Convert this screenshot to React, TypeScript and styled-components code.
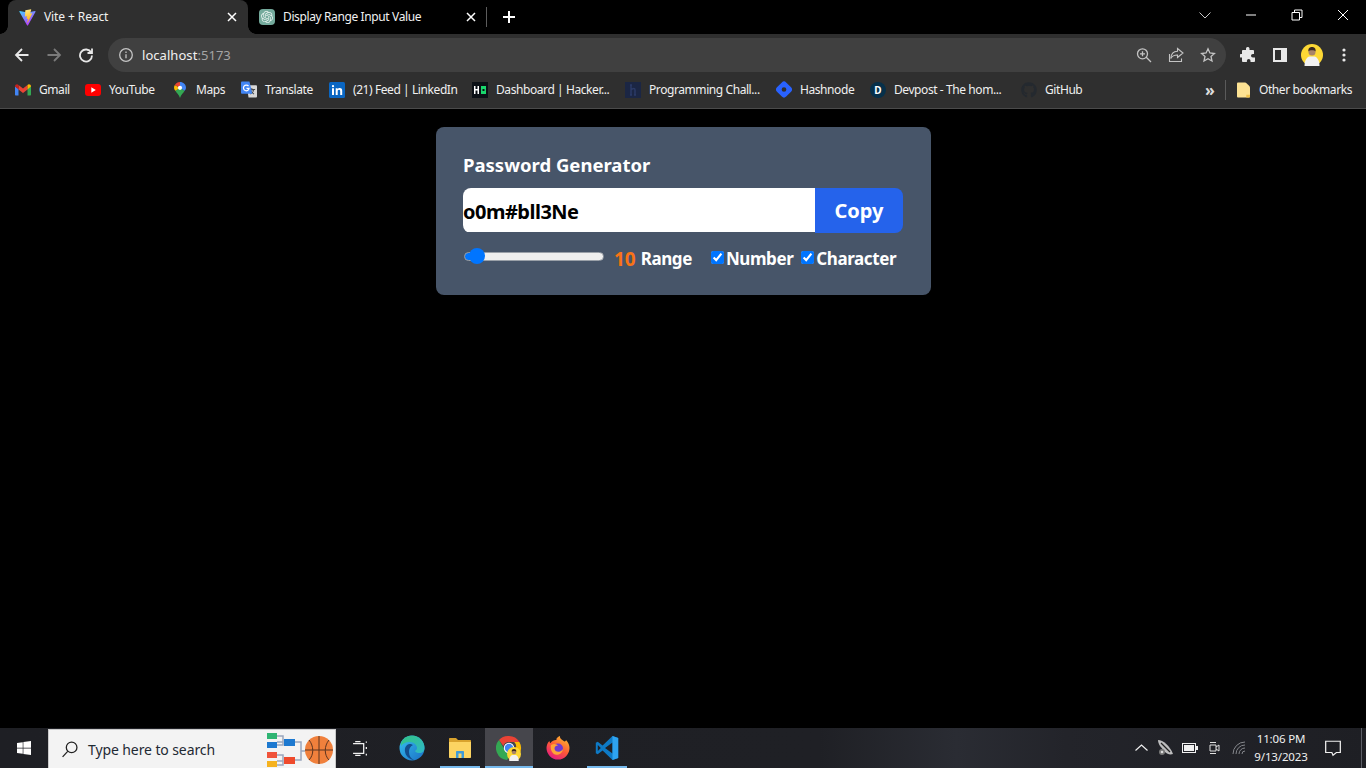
import React from "react";
import styled, { createGlobalStyle } from "styled-components";
import { FaGithub, FaWindows } from "react-icons/fa";
import { SiOpenai } from "react-icons/si";

const UI = '"Noto Sans", "Open Sans", "Liberation Sans", sans-serif';

const Global = createGlobalStyle`
  html, body { margin: 0; padding: 0; height: 100%; background: #000; overflow: hidden; }
  #root { height: 100%; }
  * { box-sizing: border-box; }
`;

const Screen = styled.div`
  width: 1366px; height: 768px; display: flex; flex-direction: column;
  background: #000; font-family: ${UI}; color: #fff; overflow: hidden;
`;

/* ---- tab strip ---- */
const TabStrip = styled.div`
  height: 34px; flex: none; display: flex; align-items: stretch; padding-left: 8px; background: #000;
`;
const Tab = styled.div<{ $active?: boolean }>`
  position: relative; width: ${p => (p.$active ? 240 : 239)}px; display: flex; align-items: center;
  padding: 0 8px 0 ${p => (p.$active ? 11 : 10)}px;
  background: ${p => (p.$active ? "#2f2f2f" : "transparent")};
  border-radius: 8px 8px 0 0;
  ${p => p.$active && `
    &::before, &::after { content: ""; position: absolute; bottom: 0; width: 8px; height: 8px;
      background: radial-gradient(circle at var(--c) 0, #000 7.5px, #2f2f2f 8px); }
    &::before { left: -8px; --c: 0; }
    &::after { right: -8px; --c: 8px; }
  `}
`;
const TabIcon = styled.span`
  width: 17px; height: 17px; flex: none; display: flex; align-items: center; justify-content: flex-end; margin-right: 8px;
`;
const ChatBadge = styled.span`
  width: 16px; height: 16px; border-radius: 4px; background: #74aa9c; color: #e8f3f0;
  display: flex; align-items: center; justify-content: center;
`;
const TabTitle = styled.span<{ $spacing: number }>`
  flex: 1; font-size: 12px; letter-spacing: ${p => p.$spacing}px; white-space: nowrap; color: #f1f1f1; line-height: 16px;
`;
const TabDivider = styled.div`
  width: 1px; height: 20px; background: #5c5c5c; align-self: center; margin-left: -1px;
`;
const NewTab = styled.div`
  width: 44px; display: flex; align-items: center; justify-content: center;
`;
const WindowControls = styled.div`
  margin-left: auto; display: flex; align-items: stretch; height: 30px;
`;
const WinBtn = styled.div`
  width: 46px; display: flex; align-items: center; justify-content: center;
`;

/* ---- toolbar ---- */
const Toolbar = styled.div`
  height: 42px; flex: none; background: #2f2f2f; display: flex; align-items: flex-start; padding: 4px 6px 0 6px;
`;
const ToolBtn = styled.div`
  width: 32px; height: 34px; flex: none; display: flex; align-items: center; justify-content: center;
`;
const Omnibox = styled.div`
  flex: 1; height: 34px; margin: 0 6px; background: #404040; border-radius: 17px;
  display: flex; align-items: center; padding: 0 2px 0 10px;
`;
const Url = styled.div`
  flex: 1; margin-left: 8px; font-size: 13px; letter-spacing: 0.05px; color: #f0f0f0; white-space: nowrap;
  span { color: #a4a4a4; }
`;

/* ---- bookmarks ---- */
const Bookmarks = styled.div`
  height: 33px; flex: none; background: #2f2f2f; border-bottom: 1px solid #4b4b4b;
  display: flex; align-items: center; padding: 0 14px 5px 15px;
`;
const Bookmark = styled.div`
  display: flex; align-items: center; margin-right: 16px;
`;
const BmIcon = styled.span`
  width: 16px; height: 16px; flex: none; margin-right: 8px; display: flex; align-items: center; justify-content: center;
`;
const BmLabel = styled.span<{ $w: number }>`
  width: ${p => p.$w}px; font-size: 12px; letter-spacing: -0.42px; white-space: nowrap; color: #f0f0f0; line-height: 16px;
`;
const BmRight = styled.div`
  margin-left: auto; display: flex; align-items: center;
`;
const Chevrons = styled.span`
  font-size: 16px; font-weight: 700; color: #dcdcdc; line-height: 16px; width: 14px; margin-right: 8px; text-align: center;
`;
const BmDivider = styled.span`
  width: 1px; height: 20px; background: #5a5a5a; margin-right: 9px;
`;

/* ---- page ---- */
const Page = styled.main`
  flex: 1; background: #000; display: flex; justify-content: center; align-items: flex-start; padding: 18px 0 0 1px;
`;
const Card = styled.section`
  width: 495px; height: 168px; background: #475569; border-radius: 8px; padding: 23px 28px 0 27px;
`;
const Title = styled.h1`
  margin: 0 0 9px; font-size: 18.5px; line-height: 29px; font-weight: 700; color: #fff;
`;
const InputRow = styled.div`
  display: flex; align-items: flex-start; height: 45px; border-radius: 8px; overflow: hidden;
`;
const PasswordField = styled.input`
  flex: 1; min-width: 0; height: 44px; border: 0; outline: 0; padding: 2px 0 0; background: #fff; color: #000;
  font: 700 20px/42px ${UI}; letter-spacing: -0.5px;
`;
const CopyBtn = styled.button`
  width: 88px; height: 45px; border: 0; padding: 0; background: #2563eb; color: #fff;
  font: 700 20px/45px ${UI};
`;
const Controls = styled.div`
  display: flex; align-items: center; height: 30px; margin-top: 11px;
`;
const RangeInput = styled.input`
  -webkit-appearance: none; appearance: none; width: 140px; height: 16px; margin: 0 0 5px 1px; background: transparent; flex: none;
  &::-webkit-slider-runnable-track {
    height: 9px; border-radius: 4.5px; border: 1px solid #9aa0a8;
    background: linear-gradient(90deg, #0075ff 0 8px, #efefef 8px);
  }
  &::-webkit-slider-thumb {
    -webkit-appearance: none; width: 16px; height: 16px; border-radius: 50%; background: #0075ff; margin-top: -5px; border: 0;
  }
`;
const RangeValue = styled.span`
  margin-left: 10px; font-size: 19px; font-weight: 700; color: #f97316; line-height: 28px;
`;
const ControlLabel = styled.label<{ $gap: number }>`
  margin-left: ${p => p.$gap}px; font-size: 17px; font-weight: 700; color: #fff; line-height: 28px;
  letter-spacing: -0.42px; white-space: nowrap; display: flex; align-items: center;
`;
const Check = styled.input`
  width: 13px; height: 13px; margin: 0 2px 3px 0; accent-color: #0075ff; flex: none;
`;

/* ---- taskbar ---- */
const Taskbar = styled.footer`
  height: 40px; flex: none; display: flex; align-items: stretch;
  background: linear-gradient(90deg, #1e1f24 0, #1f2025 60%, #2a2c33 70%, #23242a 78%, #1e1f24 100%);
`;
const TaskCell = styled.div<{ $active?: boolean; $open?: boolean; $w?: number }>`
  position: relative; width: ${p => p.$w ?? 48}px; flex: none; display: flex; align-items: center; justify-content: center;
  background: ${p => (p.$active ? "#46464c" : "transparent")};
  ${p => p.$open && `
    &::after { content: ""; position: absolute; bottom: 0; height: 2px; background: #76b9ed;
      left: ${p.$active ? 0 : 4}px; right: ${p.$active ? 0 : 4}px; }
  `}
`;
const BadgedIcon = styled.span`
  position: relative; display: block; width: 26px; height: 26px;
`;
const OverlayBadge = styled.span`
  position: absolute; right: 1px; bottom: 0; width: 14px; height: 14px; display: block; line-height: 0;
`;
const Search = styled.div`
  width: 288px; flex: none; margin-top: 1px; background: #f3f3f3; border: 1px solid #c9c9c9; border-bottom: 0;
  display: flex; align-items: center; padding-left: 12px; color: #1f2a33;
`;
const SearchText = styled.span`
  margin-left: 10px; font-size: 14px; letter-spacing: -0.1px; flex: 1; white-space: nowrap;
`;
const Tray = styled.div`
  margin-left: auto; display: flex; align-items: stretch;
`;
const Clock = styled.div`
  width: 60px; margin-right: -2px; display: flex; flex-direction: column; align-items: center; justify-content: center;
  font-size: 11.5px; line-height: 18px; letter-spacing: -0.15px; color: #f0f0f0; white-space: nowrap;
`;
const ShowDesktop = styled.div`
  width: 9px; flex: none; display: flex; justify-content: center;
  &::before { content: ""; width: 1px; background: #5c5e66; }
`;
const Bracket = styled.svg`
  margin-right: 2px;
`;

/* ---- drawings ---- */
const ViteLogo = () => (
  <svg width="17" height="17" viewBox="0 0 410 404">
    <defs>
      <linearGradient id="va" x1="0" y1="0" x2="0.6" y2="1"><stop offset="0" stopColor="#41d1ff" /><stop offset="1" stopColor="#bd34fe" /></linearGradient>
      <linearGradient id="vb" x1="0.4" y1="0" x2="0.6" y2="1"><stop offset="0" stopColor="#ffea83" /><stop offset="1" stopColor="#ffa800" /></linearGradient>
    </defs>
    <path fill="url(#va)" d="M399 63 215 392c-4 7-14 7-18 0L9 63c-4-7 2-16 10-15l184 33a10 10 0 0 0 4 0l180-33c8-1 14 8 12 15Z" />
    <path fill="url(#vb)" d="M292 1 156 28c-2 0-4 2-4 5l-8 142c0 3 3 6 6 5l38-9c4-1 7 2 6 6l-11 55c-1 4 3 7 6 6l23-7c4-1 7 2 6 6l-18 86c-1 5 6 8 9 3l2-3 108-216c2-4-1-8-5-7l-38 7c-4 1-7-3-6-6l25-86c1-4-3-8-7-7Z" />
  </svg>
);
const Line = ({ d, w = 1.2, c = "#fff", s = 16 }: { d: string; w?: number; c?: string; s?: number }) => (
  <svg width={s} height={s} viewBox="0 0 16 16" fill="none" stroke={c} strokeWidth={w}><path d={d} /></svg>
);
const Gmail = () => (
  <svg width="16" height="13" viewBox="0 0 16 12">
    <path fill="#4285f4" d="M0 3v8c0 .6.4 1 1 1h2.500V5z" /><path fill="#34a853" d="M16 3v8c0 .6-.4 1-1 1h-2.500V5z" />
    <path fill="#ea4335" d="M3.500 6V1.500L8 5l4.500-3.500V6L8 9.400z" /><path fill="#c5221f" d="M0 3c0-2.200 2.300-3 3.500-1.600V6z" /><path fill="#fbbc04" d="M16 3c0-2.200-2.300-3-3.500-1.600V6z" />
  </svg>
);
const YouTube = () => (
  <svg width="16" height="12" viewBox="0 0 16 12"><rect width="16" height="12" rx="3" fill="#f00" /><path fill="#fff" d="M6.300 3.300 10.800 6l-4.500 2.700z" /></svg>
);
const MapsPin = () => (
  <svg width="12" height="16" viewBox="0 0 12 16">
    <path fill="#34a853" d="M6 16C5 13 2.800 11 1.300 8.800L6 6l4.700 2.800C9.200 11 7 13 6 16Z" />
    <path fill="#fbbc04" d="M1.300 8.800C.4 7.700 0 6.800 0 5.800c0-1 .3-2 .9-2.800L6 6z" />
    <path fill="#ea4335" d="M.9 3C2 1.200 3.800 0 6 0l2 2.500L6 6z" />
    <path fill="#4285f4" d="M6 0c3.300 0 6 2.600 6 5.800 0 1-.4 2-1.300 3L6 6z" />
    <circle cx="6" cy="5.800" r="2.100" fill="#fff" />
  </svg>
);
const Translate = () => (
  <svg width="17" height="17" viewBox="0 0 17 17">
    <path fill="#d8d8d8" d="M6 4h10c.6 0 1 .4 1 1v11c0 .6-.4 1-1 1H8z" />
    <path fill="#4a4a4a" d="M11 7h1v1h3v1h-1c-.3 1.200-.8 2-1.400 2.700l1.500 1.300-.6.700-1.600-1.300-1.700 1.300-.6-.7 1.700-1.400c-.4-.5-.7-1-.9-1.500h1c.2.300.4.700.6 1 .5-.5.800-1.100 1-1.600H9.500V8H11z" />
    <path fill="#4285f4" d="M1 0h8l3 13H1c-.6 0-1-.4-1-1V1c0-.6.400-1 1-1Z" />
    <path fill="none" stroke="#fff" strokeWidth="1.300" d="M8 5a3 3 0 1 0 .6 2.200H5.800" />
  </svg>
);
const LinkedIn = () => (
  <svg width="16" height="16" viewBox="0 0 16 16">
    <rect width="16" height="16" rx="1.500" fill="#0a66c2" />
    <path fill="#fff" d="M3 6.200h2V13H3zM4 3a1.100 1.100 0 1 1 0 2.300A1.100 1.100 0 0 1 4 3Zm2.700 3.200h1.900v.9c.4-.6 1.100-1.100 2.100-1.100 2 0 2.500 1.300 2.500 3.100V13h-2V9.500c0-.9-.1-1.800-1.200-1.800S8.700 8.500 8.700 9.500V13h-2z" />
  </svg>
);
const HackerRank = () => (
  <svg width="16" height="16" viewBox="0 0 16 16">
    <rect width="16" height="16" fill="#0b1016" />
    <path fill="#fff" d="M2 4h1.500v3h2V4H7v8H5.500V8.500h-2V12H2z" /><rect x="9" y="4" width="5" height="8" fill="#19d76c" /><rect x="10.500" y="7" width="2" height="2" fill="#0b1016" />
  </svg>
);
const HashBook = () => (
  <svg width="16" height="16" viewBox="0 0 16 16">
    <rect width="16" height="16" fill="#1b2644" />
    <path fill="none" stroke="#2b3a66" strokeWidth="1.500" d="M5 3h2M6 3v10M5 13h2M6 8c2-2 4-2 4 0v5M9 13h2" />
  </svg>
);
const HashnodeMark = () => (
  <svg width="17" height="17" viewBox="0 0 17 17">
    <path fill="#2962ff" fillRule="evenodd" d="M1 6.200 6.200 1a3.200 3.200 0 0 1 4.600 0L16 6.200a3.200 3.200 0 0 1 0 4.600L10.800 16a3.200 3.200 0 0 1-4.600 0L1 10.800a3.200 3.200 0 0 1 0-4.600Zm7.500 4.800a2.500 2.500 0 1 0 0-5 2.500 2.500 0 0 0 0 5Z" />
  </svg>
);
const DevpostBadge = styled.span`
  width: 16px; height: 16px; border-radius: 50%; background: #06304a; color: #fff;
  font-size: 10px; font-weight: 700; display: flex; align-items: center; justify-content: center;
`;
const Folder = () => (
  <svg width="13" height="16" viewBox="0 0 14 16"><path fill="#fde293" d="M1 0h8c.4 0 5 4 5 5v10c0 .6-.4 1-1 1H1c-.6 0-1-.4-1-1V1c0-.6.4-1 1-1Z" /><path fill="#f0c14b" d="M10 16v-3h4v2c0 .6-.4 1-1 1z" /></svg>
);
const Avatar = ({ s = 22 }: { s?: number }) => (
  <svg width={s} height={s} viewBox="0 0 22 22">
    <circle cx="11" cy="11" r="11" fill="#fdd835" />
    <path fill="#f2f2f2" d="M3.500 22c0-6 2.500-9 5-9.500h5c2.500.5 5 3.500 5 9.500z" />
    <circle cx="11" cy="8" r="3.500" fill="#a98468" /><path fill="#3b2a20" d="M7.400 7.500C7 4 9 3 11 3s4 1 3.600 4.500C14 5.800 8 5.800 7.400 7.500Z" />
  </svg>
);
const Edge = () => (
  <svg width="26" height="26" viewBox="0 0 26 26">
    <defs>
      <linearGradient id="e1" x1="0" y1="0" x2="1" y2="1"><stop offset="0" stopColor="#35c1f1" /><stop offset="1" stopColor="#1b6fc4" /></linearGradient>
      <linearGradient id="e2" x1="0" y1="0" x2="1" y2="1"><stop offset="0" stopColor="#33c481" /><stop offset="1" stopColor="#2fb8c9" /></linearGradient>
    </defs>
    <circle cx="13" cy="13" r="12.500" fill="url(#e1)" />
    <path fill="url(#e2)" d="M2 8C5 1 12 0 16 1c6 1.500 9.500 6.500 9.500 12 0 3-2 5-5 5-2 0-4-.5-4.500-2 2-1 2.500-3 1.500-5C16 8 13 6.500 9.500 7 6 7.500 3.500 9 2 11z" />
    <path fill="#0f3f7e" d="M10 9c-3 1-4.500 4-4 7.500C6.500 21 10.500 24.500 15 25c-3-1.500-5-4-5-8 0-3 1-5.500 4-7-1-.8-2.700-1.300-4-1Z" opacity=".85" />
  </svg>
);
const Explorer = () => (
  <svg width="22" height="20" viewBox="0 0 22 20">
    <path fill="#d9a32d" d="M0 1c0-.6.4-1 1-1h6l2 2h12c.6 0 1 .4 1 1v3H0z" />
    <path fill="#fcd462" d="M0 4h22v15c0 .6-.4 1-1 1H1c-.6 0-1-.4-1-1z" />
    <path fill="#3f9bd8" d="M7 20v-6c0-.6.4-1 1-1h6c.6 0 1 .4 1 1v6h-2.500v-4.500h-3V20z" />
  </svg>
);
const Chrome = () => (
  <svg width="26" height="26" viewBox="0 0 26 26">
    <path fill="#ea4335" d="M13 1a12 12 0 0 1 10.400 6H13a6 6 0 0 0-5.700 4L3 5a12 12 0 0 1 10-4Z" />
    <path fill="#fbbc04" d="M23.400 7A12 12 0 0 1 13 25l5.200-9a6 6 0 0 0 0-9z" />
    <path fill="#34a853" d="M3 5l5.200 9a6 6 0 0 0 6.500 4.800L11 24.900A12 12 0 0 1 3 5Z" />
    <circle cx="13" cy="13" r="5.200" fill="#fff" /><circle cx="13" cy="13" r="4.200" fill="#4285f4" />
  </svg>
);
const Firefox = () => (
  <svg width="24" height="24" viewBox="0 0 24 24">
    <defs><linearGradient id="ff" x1="0.8" y1="0" x2="0.2" y2="1"><stop offset="0" stopColor="#ffbd2e" /><stop offset=".5" stopColor="#ff5a36" /><stop offset="1" stopColor="#e31587" /></linearGradient></defs>
    <path fill="url(#ff)" d="M1 9c.6-2 1.500-3.200 2.500-4 0 1 .3 1.700.8 2.200C6 4.500 9 3.800 10.500 4 10 2 12.500.6 14 0c-.5 2 1 3 3 4.500 1.500 1 2.500 1.500 3-.5 2.500 2.500 3.500 5.500 3.500 8a11.500 11.500 0 0 1-23 0c0-1.200.2-2 .5-3Z" />
    <circle cx="12" cy="12.500" r="5" fill="#6f3ad1" /><path fill="#ffa436" d="M5 9c3-2 6-1 7 .5-2 0-3.500 1-3.500 3 0 2.500 3 4 5.500 3 2-.7 3-2.500 3-2.500 0 3-3 6-6.500 5.800C6 18.500 4 13 5 9Z" />
  </svg>
);
const VSCode = () => (
  <svg width="24" height="24" viewBox="0 0 24 24">
    <path fill="#0e7ac6" d="M17.500 0 7.600 9.600 2.700 5.800.8 6.800v10.400l1.900 1 4.900-3.800 9.900 9.600L23.200 22V2zM2.800 15V9l3 3zm14.700 2.500L10 12l7.500-5.500z" />
    <path fill="#2ea3f0" d="M17.500 0 23.200 2v20l-5.700 2z" />
  </svg>
);
const Speaker = () => (
  <svg width="18" height="18" viewBox="0 0 18 18" fill="none">
    <path fill="#d8d8d8" d="M1 1c5 0 12 6 15 14-3 1-6 0-8-2L3 7C1.800 5 1 3 1 1Z" opacity=".85" />
    <path stroke="#222" strokeWidth="1.200" d="M4 4l9 9" /><circle cx="5" cy="13" r="3" fill="#777" /><circle cx="5" cy="13" r="1.300" fill="#ddd" />
  </svg>
);

const bookmarks: { icon: React.ReactNode; label: string; w: number }[] = [
  { icon: <Gmail />, label: "Gmail", w: 30 },
  { icon: <YouTube />, label: "YouTube", w: 47 },
  { icon: <MapsPin />, label: "Maps", w: 29 },
  { icon: <Translate />, label: "Translate", w: 48 },
  { icon: <LinkedIn />, label: "(21) Feed | LinkedIn", w: 103 },
  { icon: <HackerRank />, label: "Dashboard | Hacker...", w: 113 },
  { icon: <HashBook />, label: "Programming Chall...", w: 111 },
  { icon: <HashnodeMark />, label: "Hashnode", w: 54 },
  { icon: <DevpostBadge>D</DevpostBadge>, label: "Devpost - The hom...", w: 111 },
  { icon: <FaGithub size={16} color="#24292f" />, label: "GitHub", w: 38 },
];

export default function App() {
  return (
    <Screen>
      <Global />
      <TabStrip>
        <Tab $active>
          <TabIcon><ViteLogo /></TabIcon>
          <TabTitle $spacing={-0.1}>Vite + React</TabTitle>
          <Line d="M4 4l8 8M12 4l-8 8" w={1.5} />
        </Tab>
        <Tab>
          <TabIcon><ChatBadge><SiOpenai size={12} /></ChatBadge></TabIcon>
          <TabTitle $spacing={-0.38}>Display Range Input Value</TabTitle>
          <Line d="M4 4l8 8M12 4l-8 8" w={1.5} />
        </Tab>
        <TabDivider />
        <NewTab><Line d="M8 2v12M2 8h12" w={2} /></NewTab>
        <WindowControls>
          <WinBtn><Line d="M2.500 5.500 8 11l5.500-5.500" w={1} c="#c8c8c8" /></WinBtn>
          <WinBtn><Line d="M3 8h10" w={1} /></WinBtn>
          <WinBtn><Line d="M3 5.500h7.500V13H3zM5.500 5.500V3H13v7.500h-2.500" w={1} /></WinBtn>
          <WinBtn><Line d="M3 3l10 10M13 3 3 13" w={1} /></WinBtn>
        </WindowControls>
      </TabStrip>

      <Toolbar>
        <ToolBtn><Line d="M14.500 8H2M8 2 2 8l6 6" w={1.8} c="#e8e8e8" /></ToolBtn>
        <ToolBtn><Line d="M1.500 8H14M8 2l6 6-6 6" w={1.8} c="#7a7a7a" /></ToolBtn>
        <ToolBtn><Line d="M13.200 5.500A6 6 0 1 0 14 8.500M14 1.500v4.500H9.500" w={1.8} c="#e8e8e8" /></ToolBtn>
        <Omnibox>
          <Line d="M8 7.200v4M8 4.500v1.400M14.300 8A6.300 6.300 0 1 1 1.700 8a6.300 6.300 0 0 1 12.600 0Z" w={1.3} c="#c4c4c4" />
          <Url>localhost<span>:5173</span></Url>
          <ToolBtn><Line d="M10.500 10.500 15 15M11.500 6.800a5 5 0 1 1-10 0 5 5 0 0 1 10 0ZM6.500 4.300v5M4 6.800h5" w={1.3} c="#c4c4c4" /></ToolBtn>
          <ToolBtn><Line d="M9.500 1.500 15 6l-5.500 4.500V8C6 8 4 9 2.800 11.500 3 7.500 5.500 4.500 9.500 4.300zM1.500 7v7.500h12V11.500" w={1.1} c="#c4c4c4" /></ToolBtn>
          <ToolBtn><Line d="M8 1.800 9.900 6l4.500.5-3.400 3 1 4.500L8 11.700 4 14l1-4.500-3.400-3L6.100 6z" w={1.3} c="#c4c4c4" /></ToolBtn>
        </Omnibox>
        <ToolBtn>
          <svg width="16" height="16" viewBox="0 0 16 16"><path fill="#e8e8e8" d="M6 1.500a1.800 1.800 0 0 1 3.500 0V3H13c.5 0 1 .5 1 1v3h-1.200a1.800 1.800 0 0 0 0 3.600H15V14c0 .5-.5 1-1 1H10.500v-1.200a1.800 1.800 0 0 0-3.600 0V15H3c-.5 0-1-.5-1-1v-3.500H.8a1.800 1.800 0 0 1 0-3.500H2V4c0-.5.500-1 1-1h3z" /></svg>
        </ToolBtn>
        <ToolBtn>
          <svg width="14" height="14" viewBox="0 0 14 14"><path fill="#e8e8e8" fillRule="evenodd" d="M0 0h14v14H0zM2 2v10h6V2z" /></svg>
        </ToolBtn>
        <ToolBtn><Avatar /></ToolBtn>
        <ToolBtn>
          <svg width="4" height="14" viewBox="0 0 4 14"><g fill="#e8e8e8"><circle cx="2" cy="2" r="1.600" /><circle cx="2" cy="7" r="1.600" /><circle cx="2" cy="12" r="1.600" /></g></svg>
        </ToolBtn>
      </Toolbar>

      <Bookmarks>
        {bookmarks.map(b => (
          <Bookmark key={b.label}>
            <BmIcon>{b.icon}</BmIcon>
            <BmLabel $w={b.w}>{b.label}</BmLabel>
          </Bookmark>
        ))}
        <BmRight>
          <Chevrons>»</Chevrons>
          <BmDivider />
          <BmIcon><Folder /></BmIcon>
          <BmLabel $w={93}>Other bookmarks</BmLabel>
        </BmRight>
      </Bookmarks>

      <Page>
        <Card>
          <Title>Password Generator</Title>
          <InputRow>
            <PasswordField readOnly value="o0m#bll3Ne" />
            <CopyBtn>Copy</CopyBtn>
          </InputRow>
          <Controls>
            <RangeInput type="range" min={6} max={130} defaultValue={10} />
            <RangeValue>10</RangeValue>
            <ControlLabel $gap={5}>Range</ControlLabel>
            <ControlLabel $gap={19}><Check type="checkbox" defaultChecked />Number</ControlLabel>
            <ControlLabel $gap={8}><Check type="checkbox" defaultChecked />Character</ControlLabel>
          </Controls>
        </Card>
      </Page>

      <Taskbar>
        <TaskCell><FaWindows size={16} color="#fff" /></TaskCell>
        <Search>
          <Line d="M6.500 9.500 1.500 15M15 6a5 5 0 1 1-10 0 5 5 0 0 1 10 0Z" w={1.2} c="#222" s={17} />
          <SearchText>Type here to search</SearchText>
          <Bracket width="66" height="36" viewBox="0 0 66 36">
            <g fill="none" stroke="#9aa6bd" strokeWidth="1.500"><path d="M10 5h6v6h-6M10 14h6v-3M10 24h6v6h-6M10 34h6v-4M28 11h6v18h-6M34 20h10" /></g>
            <rect x="0" y="2" width="10" height="6" fill="#2fb573" /><rect x="0" y="11" width="10" height="6" fill="#1d79d0" />
            <rect x="0" y="21" width="10" height="6" fill="#f0533a" /><rect x="0" y="30" width="10" height="6" fill="#f5b21f" />
            <rect x="17" y="8" width="11" height="7" fill="#1d79d0" /><rect x="17" y="26" width="11" height="7" fill="#ef4a2c" />
            <circle cx="52" cy="19" r="14" fill="#f0803c" />
            <g fill="none" stroke="#5b3420" strokeWidth="1"><path d="M38 19h28M52 5v28M42 9c5 6 5 15 0 20M62 9c-5 6-5 15 0 20" /></g>
          </Bracket>
        </Search>
        <TaskCell>
          <Line d="M3 1.500h5M3 14.500h5M1 3.500h10v9H1M13.500 1.500v1M13.500 6.500v2M13.500 13v1.500" w={1.2} c="#f0f0f0" s={17} />
        </TaskCell>
        <TaskCell $w={4} />
        <TaskCell><Edge /></TaskCell>
        <TaskCell $open><Explorer /></TaskCell>
        <TaskCell $w={1} />
        <TaskCell $active $open>
          <BadgedIcon>
            <Chrome />
            <OverlayBadge><Avatar s={14} /></OverlayBadge>
          </BadgedIcon>
        </TaskCell>
        <TaskCell $w={1} />
        <TaskCell><Firefox /></TaskCell>
        <TaskCell $w={1} />
        <TaskCell $open><VSCode /></TaskCell>
        <Tray>
          <TaskCell $w={24}><Line d="M1.500 10.500 7.500 5l6 5.500" w={1.2} c="#f0f0f0" /></TaskCell>
          <TaskCell $w={24}><Speaker /></TaskCell>
          <TaskCell $w={24}>
            <svg width="16" height="10" viewBox="0 0 16 10"><rect x=".5" y=".5" width="13" height="9" fill="none" stroke="#f0f0f0" /><rect x="2" y="2" width="10" height="6" fill="#f0f0f0" /><rect x="14" y="3" width="2" height="4" fill="#f0f0f0" /></svg>
          </TaskCell>
          <TaskCell $w={24}><Line d="M4 5h6v6H4zM10 7l3-2v6l-3-2M4 2.500h6M4 13.500h6" w={1} c="#e0e0e0" /></TaskCell>
          <TaskCell $w={25}><Line d="M2 14A12 12 0 0 1 14 2M5 14a9 9 0 0 1 9-9M8 14a6 6 0 0 1 6-6M11 14a3 3 0 0 1 3-3" w={1} c="#85878c" /></TaskCell>
          <Clock><span>11:06 PM</span><span>9/13/2023</span></Clock>
          <TaskCell><Line d="M1.500 2h13v10H11l-3 2.500-1-2.500H1.500z" w={1.1} c="#f0f0f0" s={18} /></TaskCell>
          <ShowDesktop />
        </Tray>
      </Taskbar>
    </Screen>
  );
}
